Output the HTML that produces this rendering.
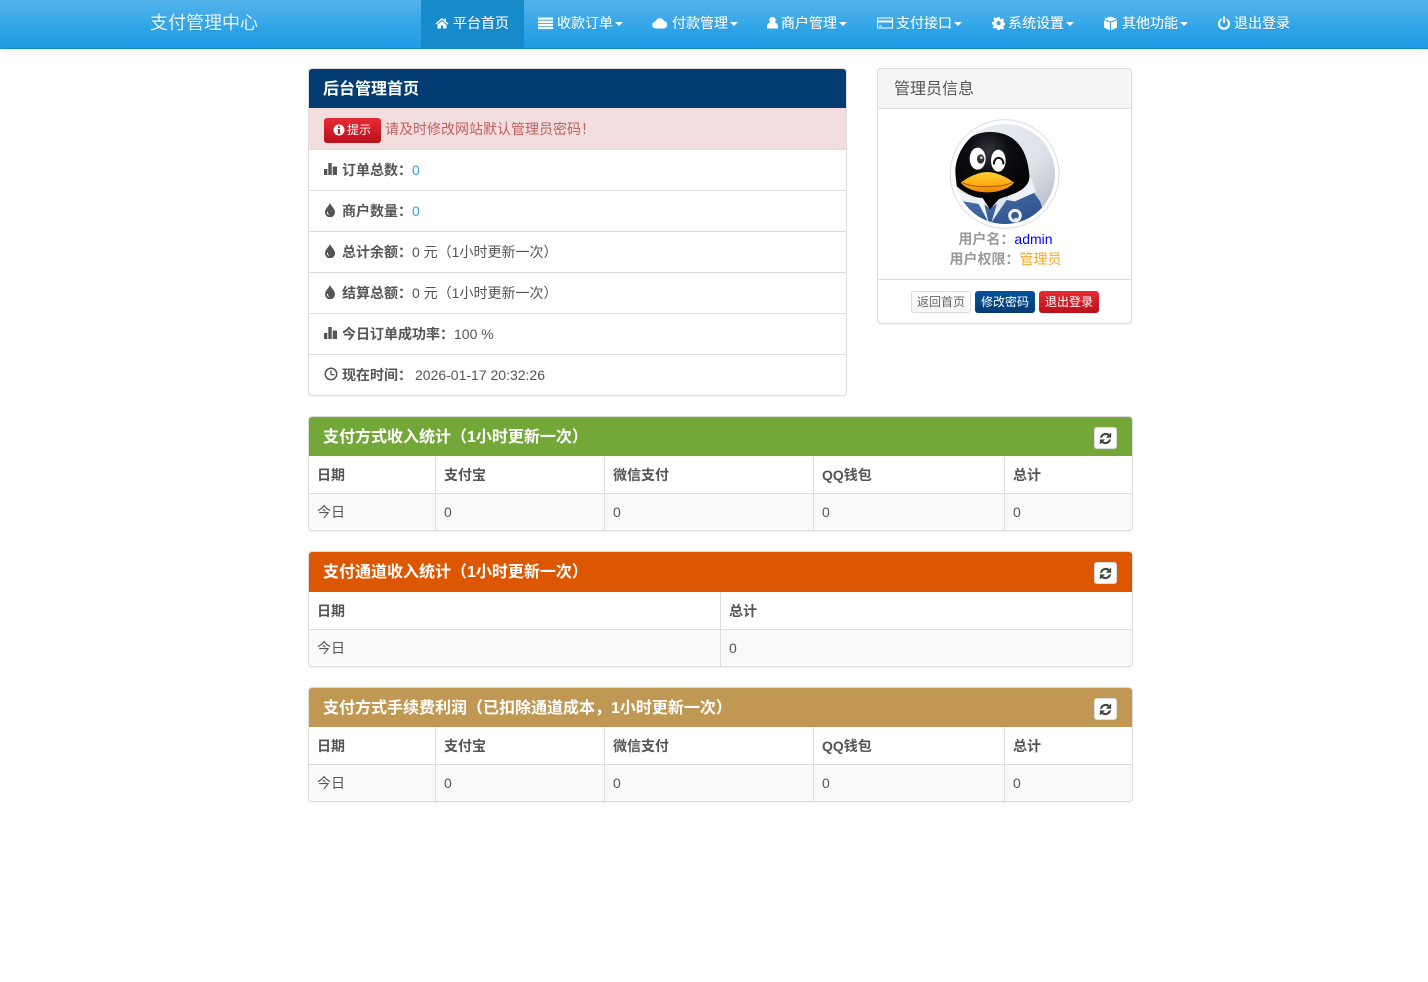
<!DOCTYPE html>
<html lang="zh-CN"><head><meta charset="utf-8"><title>支付管理中心</title>
<style>
*{box-sizing:border-box}
html,body{margin:0;padding:0;width:1428px;height:982px;overflow:hidden;background:#fff}
body{font-family:"Liberation Sans","WenQuanYi Zen Hei","Noto Sans CJK SC",sans-serif;font-size:14px;line-height:20px;color:#555;position:relative}
.nav{position:absolute;left:0;top:0;width:1428px;height:49px;background:linear-gradient(#54b4eb,#2fa4e7 60%,#1d9ce5);border-bottom:1px solid #178acc;box-shadow:0 1px 10px rgba(0,0,0,.1)}
.brand{position:absolute;left:150px;top:12px;font-size:18px;line-height:22px;color:#e8f5fd;text-shadow:0 1px 0 rgba(0,0,0,.1)}
.active{position:absolute;left:421px;top:0;width:103px;height:48px;background:#178acc}
.ni{position:absolute;top:13px;color:#fff;white-space:nowrap;line-height:20px;text-shadow:0 1px 0 rgba(0,0,0,.1),0 0 .5px rgba(255,255,255,.6)}
.ni svg{position:absolute;top:3px;fill:#fff}
.caret{display:inline-block;width:0;height:0;border-top:4px solid #fff;border-left:4px solid transparent;border-right:4px solid transparent;vertical-align:middle;margin-left:2px}
.panel{position:absolute;background:#fff;border:1px solid #ddd;border-radius:4px;box-shadow:0 1px 1px rgba(0,0,0,.05);overflow:hidden}
.ph{position:absolute;left:0;top:0;right:0;color:#fff;font-size:16px;line-height:20px;padding:9px 14px 0;font-weight:700}
.ph span{position:relative;top:2px}
.row{position:absolute;left:0;right:0;height:41px;border-top:1px solid #ddd}
.row b{position:absolute;left:33px;top:10px;white-space:nowrap}
.row span.v{position:absolute;top:10px;white-space:nowrap}
.row svg{position:absolute;left:15px;top:12px;fill:#555}
.b{color:#2fa4e7}
.tag{position:absolute;left:15px;top:10px;width:57px;height:25px;border-radius:3px;background:linear-gradient(#e72b35,#b9101c);color:#fff;font-size:12px;line-height:24px;padding-left:23px}
.tag svg{position:absolute;left:9px;top:6px;fill:#fff}
.btn{position:absolute;top:291px;height:22px;width:60px;border-radius:3px;font-size:12px;line-height:22px;text-align:center;color:#fff}
table{position:absolute;left:0;border-collapse:separate;border-spacing:0;table-layout:fixed;width:823px}
th,td{border:0;border-right:1px solid #ddd;border-bottom:1px solid #ddd;padding:0 8px;text-align:left;font-size:14px;line-height:20px;color:#555}
th{height:38px}
td{height:36px;background:#f9f9f9;border-bottom:0}
tr th:last-child,tr td:last-child{border-right:0}
.rf{position:absolute;right:15px;top:10px;width:23px;height:22px;background:#fff;border:1px solid #ddd;border-radius:3px}
.rf svg{position:absolute;left:4px;top:4px}
</style></head><body>

<div class="nav">
<div class="brand">支付管理中心</div>
<div class="active"></div>
<div class="ni" style="left:453px"><svg style="left:-18px" width="14" height="14" viewBox="0 0 14 14"><path d="M7 2 0.500 7.600l.8 1L7 3.800l5.700 4.800.8-1L11 5.500V2.500H9.500v1.700zM7 5 2.500 8.800V12.500H6V9.500H8V12.500H11.500V8.800z"/></svg>平台首页</div>
<div class="ni" style="left:557px"><svg style="left:-19px" width="15" height="14" viewBox="0 0 15 14"><path d="M0 1.500h15v2.300H0zM0 4.700h15v2.300H0zM0 7.900h15v2.300H0zM0 11.100h15v2H0z"/></svg>收款订单<i class="caret"></i></div>
<div class="ni" style="left:672px"><svg style="left:-20px" width="16" height="14" viewBox="0 0 16 14"><path d="M4 12.500a3.500 3.500 0 0 1-.5-7A4.500 4.500 0 0 1 12 5a3.800 3.800 0 0 1 0 7.500z"/></svg>付款管理<i class="caret"></i></div>
<div class="ni" style="left:781px"><svg style="left:-14px" width="11" height="14" viewBox="0 0 11 14"><path d="M5.500 1a3 3 0 0 1 2.200 5.200C10 7 11 8.500 11 11v1.500H0V11c0-2.500 1-4 3.300-4.800A3 3 0 0 1 5.500 1z"/></svg>商户管理<i class="caret"></i></div>
<div class="ni" style="left:896px"><svg style="left:-19px" width="16" height="14" viewBox="0 0 16 14"><path fill-rule="evenodd" d="M0 1.500h16v11H0zM1 2.500V4.500H15V2.500zM1 6.500V11.500H15V6.500zM2 9.500H5V10.500H2z"/></svg>支付接口<i class="caret"></i></div>
<div class="ni" style="left:1008px"><svg style="left:-16px" width="13" height="14" viewBox="0 0 13 14"><path fill-rule="evenodd" d="M5.300 1h2.400l.3 1.700 1.100.5 1.500-1 1.600 1.700-1 1.400.5 1.200 1.800.3v2.400l-1.800.3-.5 1.200 1 1.400-1.600 1.700-1.500-1-1.100.5-.3 1.700H5.300L5 12.400l-1.100-.5-1.500 1L.8 11.200l1-1.400-.5-1.200L0 8.300V5.900l1.800-.3.500-1.200-1-1.400L2.400 1.300l1.500 1 1.100-.5zM6.500 5a2.100 2.100 0 1 0 0 4.200 2.100 2.100 0 0 0 0-4.200z"/></svg>系统设置<i class="caret"></i></div>
<div class="ni" style="left:1122px"><svg style="left:-19px" width="15" height="15" viewBox="0 0 15 15"><path d="M7.500.5 14 3 7.500 5.500 1 3zM1 4.200 7 6.500V14.500L1 11.500zM14 4.200V11.500L8 14.500V6.500z"/></svg>其他功能<i class="caret"></i></div>
<div class="ni" style="left:1234px"><svg style="left:-17px" width="14" height="14" viewBox="0 0 14 14"><path d="M6 0.500h2v6.500H6zM4.500 2.300v2.100a4 4 0 1 0 5 0V2.300a6 6 0 1 1-5 0z"/></svg>退出登录</div>
</div>

<div class="panel" style="left:308px;top:68px;width:539px;height:328px">
<div class="ph" style="background:#033c73;height:39px"><span>后台管理首页</span></div>
<div class="row" style="top:39px;height:41px;border-top:0;background:#f2dede;color:#b94a48">
<div class="tag"><svg width="12" height="12" viewBox="0 0 12 12"><path fill-rule="evenodd" d="M6 .5a5.500 5.500 0 1 1 0 11 5.500 5.500 0 0 1 0-11zM5 2.200V4H7V2.200zM4.500 5V6H5V8.500H4.500V9.700H7.500V8.500H7V5z"/></svg>提示</div>
<span class="v" style="left:76px;top:11px;color:#c0605e">请及时修改网站默认管理员密码！</span></div>
<div class="row" style="top:80px"><svg width="14" height="14" viewBox="0 0 14 14"><path d="M0 7h3.300v6H0zM4.300 1h3.400v12H4.300zM8.700 4.500H13V13H8.700z"/></svg><b>订单总数：</b><span class="v b" style="left:103px">0</span></div>
<div class="row" style="top:121px"><svg width="12" height="14" viewBox="0 0 12 14"><path fill-rule="evenodd" d="M6 0C7 3 11 5.500 11 9.300A5 5 0 0 1 1 9.300C1 5.500 5 3 6 0zM3 9c0 2 1.200 3 2.500 3.200C4.200 11 4 10 4 8.500z"/></svg><b>商户数量：</b><span class="v b" style="left:103px">0</span></div>
<div class="row" style="top:162px"><svg width="12" height="14" viewBox="0 0 12 14"><path fill-rule="evenodd" d="M6 0C7 3 11 5.500 11 9.300A5 5 0 0 1 1 9.300C1 5.500 5 3 6 0zM3 9c0 2 1.200 3 2.500 3.200C4.200 11 4 10 4 8.500z"/></svg><b>总计余额：</b><span class="v" style="left:103px">0 元（1小时更新一次）</span></div>
<div class="row" style="top:203px"><svg width="12" height="14" viewBox="0 0 12 14"><path fill-rule="evenodd" d="M6 0C7 3 11 5.500 11 9.300A5 5 0 0 1 1 9.300C1 5.500 5 3 6 0zM3 9c0 2 1.200 3 2.500 3.200C4.200 11 4 10 4 8.500z"/></svg><b>结算总额：</b><span class="v" style="left:103px">0 元（1小时更新一次）</span></div>
<div class="row" style="top:244px"><svg width="14" height="14" viewBox="0 0 14 14"><path d="M0 7h3.300v6H0zM4.300 1h3.400v12H4.300zM8.700 4.500H13V13H8.700z"/></svg><b>今日订单成功率：</b><span class="v" style="left:145px">100 %</span></div>
<div class="row" style="top:285px"><svg width="14" height="14" viewBox="0 0 14 14"><path fill-rule="evenodd" d="M7 .5a6.500 6.500 0 1 1 0 13 6.500 6.500 0 0 1 0-13zM7 2a5 5 0 1 0 0 10A5 5 0 0 0 7 2zM6.300 3.500h1.400V7H10.500V8.300H6.300z"/></svg><b>现在时间：</b><span class="v" style="left:106px">2026-01-17 20:32:26</span></div>
</div>

<div class="panel" style="left:877px;top:68px;width:255px;height:256px">
<div style="position:absolute;left:0;top:0;right:0;height:40px;background:#f5f5f5;border-bottom:1px solid #ddd;padding:11px 16px 0;font-size:16px;line-height:20px">管理员信息</div>
<div style="position:absolute;left:1px;right:-1px;top:160px;text-align:center;color:#999;font-weight:700;line-height:20px"><div>用户名：<span style="color:#00f;font-weight:400">admin</span></div><div>用户权限：<span style="color:#f9a32a;font-weight:400">管理员</span></div></div>
<div style="position:absolute;left:0;right:0;top:210px;border-top:1px solid #ddd"></div>
</div>

<svg style="position:absolute;left:949px;top:119px" width="112" height="112" viewBox="0 0 112 112">
<defs>
<clipPath id="c"><circle cx="195" cy="186" r="150"/></clipPath>
<linearGradient id="bg" x1="0" y1="0" x2="1" y2="1"><stop offset="0" stop-color="#eef1f5"/><stop offset=".6" stop-color="#dde1e8"/><stop offset="1" stop-color="#aab1bd"/></linearGradient>
<linearGradient id="beak" x1="0" y1="0" x2="0" y2="1"><stop offset="0" stop-color="#ffd030"/><stop offset=".6" stop-color="#ffab10"/><stop offset="1" stop-color="#e88400"/></linearGradient>
<linearGradient id="shirt" x1="0" y1="0" x2="1" y2="1"><stop offset="0" stop-color="#4f77b0"/><stop offset="1" stop-color="#274a85"/></linearGradient>
<radialGradient id="head" cx=".45" cy=".25" r=".8"><stop offset="0" stop-color="#35353f"/><stop offset=".35" stop-color="#0c0c12"/><stop offset="1" stop-color="#000"/></radialGradient>
</defs>
<g transform="translate(-9,-7) scale(.33333)">
<circle cx="194" cy="186" r="163" fill="#fff" stroke="#ddd" stroke-width="3"/>
<g clip-path="url(#c)">
<rect x="40" y="30" width="310" height="310" fill="url(#bg)"/>
<path d="M55 262 105 258 150 290 200 255 270 225 300 268 325 340H60z" fill="url(#shirt)"/>
<path d="M45 232 100 258 128 256 146 332 116 276 82 270 58 266z" fill="#eef2f8"/>
<path d="M176 258 205 256 154 332z" fill="#dfe6f0"/>
<path d="M205 250 272 195 288 240 225 268 200 264z" fill="#eef2f8"/>
<path d="M46 180C46 105 85 60 150 60 225 60 262 110 268 190 270 210 258 225 240 236 215 250 190 255 176 262L150 292 128 258C100 258 68 240 50 222z" fill="url(#head)"/>
<ellipse cx="113" cy="140" rx="24" ry="33" fill="#fff"/>
<ellipse cx="175" cy="146" rx="22" ry="33" fill="#fff"/>
<ellipse cx="122" cy="141" rx="11" ry="14" fill="#333"/>
<circle cx="124" cy="137" r="4" fill="#ddd"/>
<path d="M162 155C162 132 190 132 190 155" fill="none" stroke="#111" stroke-width="6" stroke-linecap="round"/>
<path d="M62 212C85 195 115 180 142 180 170 180 205 198 222 212 205 232 170 242 140 241 110 241 80 232 62 212z" fill="url(#beak)"/>
<path d="M68 212C100 228 180 228 216 212" fill="none" stroke="#a65500" stroke-width="3"/>
<path d="M232 330 226 318" stroke="#eef2f8" stroke-width="7"/>
<circle cx="225" cy="311" r="16" fill="none" stroke="#eef2f8" stroke-width="9"/>
</g>
</g>
</svg>

<div class="btn" style="left:911px;background:linear-gradient(#fff,#f5f5f5);border:1px solid #ddd;color:#666;line-height:20px">返回首页</div>
<div class="btn" style="left:975px;background:linear-gradient(#04519b,#033c73)">修改密码</div>
<div class="btn" style="left:1039px;background:linear-gradient(#e72b35,#b9101c)">退出登录</div>

<div class="panel" style="left:308px;top:416px;width:825px;height:115px">
<div class="ph" style="background:#73a839;height:39px"><span>支付方式收入统计（1小时更新一次）</span></div>
<div class="rf"><svg width="13" height="13" viewBox="0 0 12 12"><path fill="#444" stroke="#444" stroke-width=".5" d="M6 1a5 5 0 0 1 3.500 1.400L11 1v4H7l1.500-1.500A3.500 3.500 0 0 0 2.700 5H1.200A5 5 0 0 1 6 1zM1 7h4L3.500 8.500A3.500 3.500 0 0 0 9.300 7h1.500A5 5 0 0 1 2.500 9.600L1 11z"/></svg></div>
<table style="top:39px"><colgroup><col style="width:127px"><col style="width:169px"><col style="width:209px"><col style="width:191px"><col></colgroup>
<tr><th>日期</th><th>支付宝</th><th>微信支付</th><th>QQ钱包</th><th>总计</th></tr>
<tr><td>今日</td><td>0</td><td>0</td><td>0</td><td>0</td></tr></table>
</div>

<div class="panel" style="left:308px;top:551px;width:825px;height:116px">
<div class="ph" style="background:#dd5600;height:40px"><span>支付通道收入统计（1小时更新一次）</span></div>
<div class="rf"><svg width="13" height="13" viewBox="0 0 12 12"><path fill="#444" stroke="#444" stroke-width=".5" d="M6 1a5 5 0 0 1 3.500 1.400L11 1v4H7l1.500-1.500A3.500 3.500 0 0 0 2.700 5H1.200A5 5 0 0 1 6 1zM1 7h4L3.500 8.500A3.500 3.500 0 0 0 9.300 7h1.500A5 5 0 0 1 2.500 9.600L1 11z"/></svg></div>
<table style="top:40px"><colgroup><col style="width:412px"><col></colgroup>
<tr><th>日期</th><th>总计</th></tr>
<tr><td>今日</td><td>0</td></tr></table>
</div>

<div class="panel" style="left:308px;top:687px;width:825px;height:115px">
<div class="ph" style="background:#c09853;height:39px"><span>支付方式手续费利润（已扣除通道成本，1小时更新一次）</span></div>
<div class="rf"><svg width="13" height="13" viewBox="0 0 12 12"><path fill="#444" stroke="#444" stroke-width=".5" d="M6 1a5 5 0 0 1 3.500 1.400L11 1v4H7l1.500-1.500A3.500 3.500 0 0 0 2.700 5H1.200A5 5 0 0 1 6 1zM1 7h4L3.500 8.500A3.500 3.500 0 0 0 9.300 7h1.500A5 5 0 0 1 2.500 9.600L1 11z"/></svg></div>
<table style="top:39px"><colgroup><col style="width:127px"><col style="width:169px"><col style="width:209px"><col style="width:191px"><col></colgroup>
<tr><th>日期</th><th>支付宝</th><th>微信支付</th><th>QQ钱包</th><th>总计</th></tr>
<tr><td>今日</td><td>0</td><td>0</td><td>0</td><td>0</td></tr></table>
</div>

</body></html>
